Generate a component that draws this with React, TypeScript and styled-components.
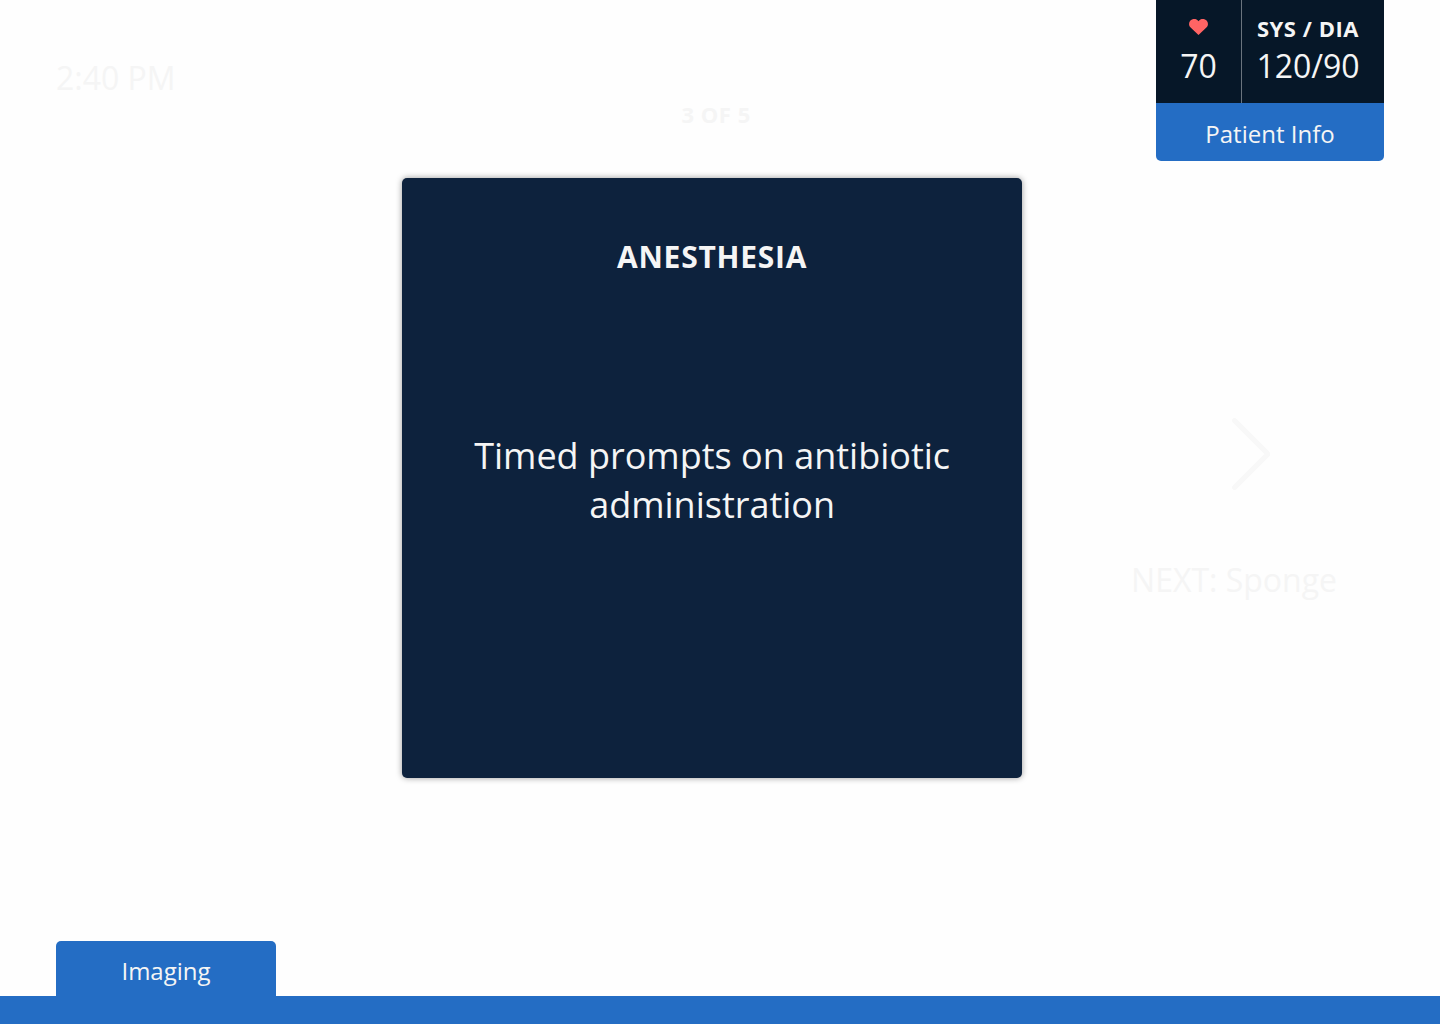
import React from "react";
import styled, { createGlobalStyle } from "styled-components";

const colors = {
  page: "#fefefe",
  ink: "#f5f5f5",
  blue: "#246dc4",
  card: "#0d223d",
  vitals: "#061728",
  heart: "#ff6464",
};

const GlobalStyle = createGlobalStyle`
  *, *::before, *::after { box-sizing: border-box; }
  body {
    margin: 0;
    background: ${colors.page};
    color: ${colors.ink};
    font-family: "Open Sans", "Noto Sans", sans-serif;
  }
  button { font: inherit; color: inherit; border: 0; cursor: pointer; }
  h1, h2, p, dl, dt, dd { margin: 0; }
`;

const Page = styled.div`
  min-height: 100vh;
  display: flex;
  flex-direction: column;
`;

const Columns = styled.div`
  display: grid;
  grid-template-columns: minmax(0, 22fr) 620px minmax(0, 23fr);
  padding: 0 56px;
`;

const Header = styled(Columns).attrs({ as: "header" })`
  margin-bottom: 17px;
`;

const Clock = styled.time`
  padding-top: 56px;
  font-size: 32px;
  line-height: 44px;
`;

const Label = styled.span`
  font-size: 22px;
  line-height: 28px;
  font-weight: 700;
  letter-spacing: 0.025em;
`;

const Counter = styled.p`
  display: flex;
  justify-content: center;
  padding: 100px 0 0 8px;
`;

const VitalsPanel = styled.section`
  justify-self: end;
  width: 228px;
  border-radius: 0 0 5px 5px;
  overflow: hidden;
`;

const Vitals = styled.dl`
  display: flex;
  height: 103px;
  background: ${colors.vitals};
`;

const Vital = styled.div<{ $wide?: boolean }>`
  flex: ${(p) => (p.$wide ? "1" : "0 0 86px")};
  display: flex;
  flex-direction: column;
  align-items: center;
  padding: 14px ${(p) => (p.$wide ? "10px" : "0")} 0 0;
  border-right: ${(p) => (p.$wide ? "0" : "1px solid #6a747e")};
`;

const VitalName = styled.dt`
  display: flex;
  align-items: start;
  height: 30px;
`;

const VitalValue = styled.dd`
  font-size: 32px;
  line-height: 44px;
`;

const HeartIcon = styled.svg`
  width: 20px;
  height: 18px;
  margin-top: 4px;
  fill: ${colors.heart};
`;

const InfoButton = styled.button`
  display: block;
  width: 100%;
  height: 58px;
  padding: 4px 0 0;
  background: ${colors.blue};
  font-size: 24px;
  line-height: 32px;
`;

const Main = styled(Columns).attrs({ as: "main" })`
  flex: 1;
  align-items: start;
`;

const Card = styled.article`
  grid-column: 2;
  min-height: 600px;
  padding: 59px 64px;
  border-radius: 5px;
  background: ${colors.card};
  box-shadow: 0 0 6px rgba(0, 0, 0, 0.4);
  text-align: center;
`;

const CardTitle = styled.h1`
  font-size: 30px;
  line-height: 40px;
  font-weight: 700;
  letter-spacing: 0.025em;
`;

const CardText = styled.p`
  margin-top: 154px;
  font-size: 36px;
  line-height: 49px;
`;

const NextButton = styled.button`
  display: flex;
  flex-direction: column;
  align-items: center;
  margin: 240px 0 0 62px;
  padding: 0;
  background: none;
  font-size: 32px;
  line-height: 44px;
`;

const Chevron = styled.svg`
  width: 72px;
  height: 72px;
  margin-bottom: 68px;
  fill: none;
  stroke: #f8f8f8;
  stroke-width: 5;
  stroke-linecap: round;
  stroke-linejoin: miter;
`;

const Footer = styled.footer`
  padding: 0 56px;
  border-bottom: 28px solid ${colors.blue};
`;

const Tab = styled.button`
  display: block;
  width: 220px;
  height: 55px;
  padding: 4px 0 0;
  border-radius: 5px 5px 0 0;
  background: ${colors.blue};
  font-size: 24px;
  line-height: 32px;
`;

export default function App() {
  return (
    <Page>
      <GlobalStyle />
      <Header>
        <Clock dateTime="14:40">2:40 PM</Clock>
        <Counter>
          <Label>3 OF 5</Label>
        </Counter>
        <VitalsPanel>
          <Vitals>
            <Vital>
              <VitalName>
                <HeartIcon viewBox="0 0 20 18" role="img" aria-label="Heart rate">
                  <path d="M9.500 17 1.600 9.600C-.4 7.700-.4 4.500 1.200 2.800 3.300.6 7.300.4 9.500 3.200 11.700.4 15.700.6 17.800 2.800 19.400 4.500 19.400 7.700 17.400 9.600Z" />
                </HeartIcon>
              </VitalName>
              <VitalValue>70</VitalValue>
            </Vital>
            <Vital $wide>
              <VitalName>
                <Label>SYS / DIA</Label>
              </VitalName>
              <VitalValue>120/90</VitalValue>
            </Vital>
          </Vitals>
          <InfoButton type="button">Patient Info</InfoButton>
        </VitalsPanel>
      </Header>
      <Main>
        <Card>
          <CardTitle>ANESTHESIA</CardTitle>
          <CardText>Timed prompts on antibiotic administration</CardText>
        </Card>
        <NextButton type="button">
          <Chevron viewBox="0 0 72 72" aria-hidden="true">
            <path d="M36.5 2.5 70 36 36.5 69.5" />
          </Chevron>
          NEXT: Sponge
        </NextButton>
      </Main>
      <Footer>
        <Tab type="button">Imaging</Tab>
      </Footer>
    </Page>
  );
}
